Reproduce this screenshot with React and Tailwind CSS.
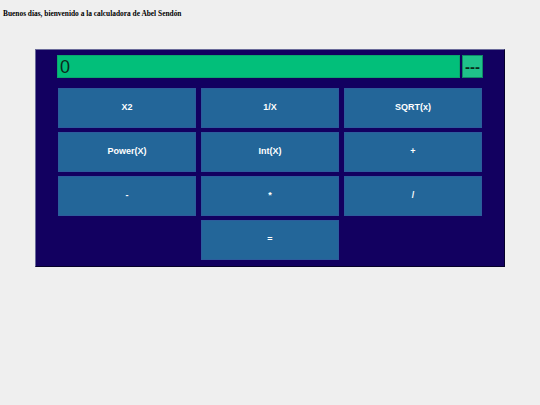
import React, { useState } from 'react'

const keys = ['X2', '1/X', 'SQRT(x)', 'Power(X)', 'Int(X)', '+', '-', '*', '/']

const App = () => {
  const [value] = useState('0')

  return (
    <div className="min-h-screen w-full bg-[#efefef]">
      <h1 className="px-[3px] pt-[10px] text-[7.4px] font-bold leading-[8px] text-black [font-family:'Liberation_Serif',serif]">
        Buenos días, bienvenido a la calculadora de Abel Sendón
      </h1>

      {/* Calculator panel */}
      <div className="ml-[35px] mt-[31px] h-[218px] w-[470px] border border-t-[#6a6a9a] border-l-[#6a6a9a] border-r-[#05002a] border-b-[#05002a] bg-[#120060] pl-[21px] pt-[5px] [font-family:'Liberation_Sans',Arial,sans-serif]">
        <div className="flex items-center gap-[2px]">
          <div className="flex h-[23px] w-[403px] items-center border border-[#0aa66c] bg-[#02bf7a] pl-[2px] text-[18px] leading-none text-[#0b2a1a]">
            {value}
          </div>
          <button className="flex h-[23px] w-[21px] items-center justify-center overflow-visible whitespace-nowrap border border-[#0f8a66] bg-[#1fc28a] text-[15px] font-bold leading-none text-[#0b2a1a]">
            ---
          </button>
        </div>

        {/* Keypad */}
        <div className="ml-[1px] mt-[10px] grid w-[424px] grid-cols-3 gap-x-[5px] gap-y-[4px]">
          {keys.map((k) => (
            <button
              key={k}
              className="flex h-[40px] items-center justify-center border border-[#2c5c9c] bg-[#236699] text-[9px] font-bold text-white"
            >
              {k}
            </button>
          ))}
          <button className="col-start-2 flex h-[40px] items-center justify-center border border-[#2c5c9c] bg-[#236699] text-[9px] font-bold text-white">
            =
          </button>
        </div>
      </div>
    </div>
  )
}

export default App
